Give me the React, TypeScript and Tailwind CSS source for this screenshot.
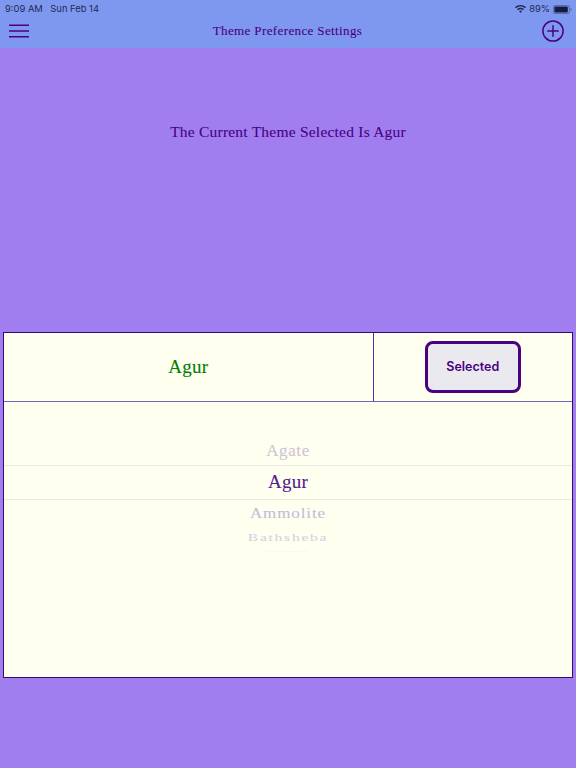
const serif = "font-['Liberation_Serif',serif] [-webkit-text-stroke:0.1px]";
const sans = "font-['Inter',sans-serif]";

function Hamburger() {
  return (
    <svg width="20" height="14" viewBox="0 0 20 14" fill="none" stroke="#4b0082" strokeWidth="1.5">
      <path d="M0 1.25H20M0 7H20M0 12.75H20" />
    </svg>
  );
}

function PlusCircle() {
  return (
    <svg width="22" height="22" viewBox="0 0 22 22" fill="none" stroke="#4b0082" strokeWidth="1.5" strokeLinecap="round">
      <circle cx="11" cy="11" r="10.1" />
      <path d="M11 5.8V16.2M5.8 11H16.2" />
    </svg>
  );
}

function Wifi() {
  return (
    <svg width="11" height="8" viewBox="0 0 11 8" fill="#1e2a55">
      <path d="M5.5 0C3.4 0 1.5.8 0 2.2l1 1.1C2.2 2.1 3.8 1.5 5.5 1.5s3.3.6 4.5 1.8l1-1.1C9.5.8 7.6 0 5.5 0z" />
      <path d="M5.5 2.8c-1.3 0-2.5.5-3.4 1.4l1 1.1c.6-.6 1.5-1 2.4-1s1.8.4 2.4 1l1-1.1C8 3.3 6.8 2.8 5.5 2.8z" />
      <path d="M5.5 5.4c-.6 0-1.1.2-1.5.6L5.5 8 7 6c-.4-.4-.9-.6-1.5-.6z" />
    </svg>
  );
}

function Battery() {
  return (
    <svg width="19" height="9" viewBox="0 0 19 9" fill="none">
      <rect x=".4" y=".4" width="16" height="8.2" rx="2" stroke="#1e2a55" strokeWidth=".7" opacity=".6" />
      <rect x="1.4" y="1.4" width="13.4" height="6.2" rx="1" fill="#141c40" />
      <path d="M17.6 3v3c.6-.2 1-.8 1-1.5s-.4-1.3-1-1.5z" fill="#1e2a55" opacity=".6" />
    </svg>
  );
}

export default function App() {
  return (
    <div className="w-[576px] h-[768px] flex flex-col bg-[#a07ef0] overflow-hidden">
      <header className="h-[48px] bg-[#7d98ee] flex flex-col shrink-0">
        <div className={`h-[15px] flex items-center justify-between pl-[5px] pr-[4px] pt-[3px] text-[9.4px] text-[#1e2a55] ${sans}`}>
          <div className="flex gap-[7.5px]">
            <span>9:09 AM</span>
            <span>Sun Feb 14</span>
          </div>
          <div className="flex items-center gap-[3px]">
            <Wifi />
            <span>89%</span>
            <Battery />
          </div>
        </div>
        <div className="flex-1 flex items-center justify-between pl-[9px] pr-[12px] pb-[1px]">
          <Hamburger />
          <span className={`ml-[4px] text-[13px] tracking-[0.38px] text-[#4b0082] ${serif}`}>Theme Preference Settings</span>
          <PlusCircle />
        </div>
      </header>

      <div className="h-[283.5px] shrink-0 flex justify-center pt-[72px]">
        <span className={`text-[15.5px] h-[20px] tracking-[0.22px] text-[#4b0082] ${serif}`}>The Current Theme Selected Is Agur</span>
      </div>

      <section className="ml-[3px] w-[570px] h-[346px] border-[1.5px] border-[#2f0f6e] bg-[#fffff0] flex flex-col">
        <div className="h-[69px] flex border-b border-b-[#7562bc]">
          <div className={`w-[369.5px] pt-[1px] flex items-center justify-center text-[19px] tracking-[0.2px] text-[#008000] border-r-[1.5px] border-r-[#4a35a8] ${serif}`}>
            Agur
          </div>
          <div className="flex-1 flex items-center justify-center">
            <button className={`w-[96px] h-[52px] pt-[2px] rounded-[8px] border-[3.5px] border-[#4b0082] bg-[#e9e9ee] text-[12.5px] font-semibold text-[#4b0082] ${sans}`}>
              Selected
            </button>
          </div>
        </div>

        <div className={`flex flex-col items-center pt-[34px] ${serif}`}>
          <div className="h-[29px] pt-[1px] w-full flex items-center justify-center text-[17px] tracking-[0.6px] text-[#cfc4d6]">Agate</div>
          <div className="h-[35px] pt-[1px] w-full flex items-center justify-center border-y border-[#ebebe0] text-[19px] tracking-[0.2px] text-[#54208c]">Agur</div>
          <div className="h-[26px] pt-[1px] w-full flex items-center justify-center text-[17px] tracking-[0.9px] text-[#c6bbdc] scale-y-[0.9]">Ammolite</div>
          <div className="h-[23px] pt-[1px] w-full flex items-center justify-center text-[15.5px] tracking-[1.75px] text-[#d6cfe2] scale-y-[0.6]">Bathsheba</div>
          <div className="h-[4px] w-full flex items-center justify-center text-[12px] tracking-[1.2px] text-[#f3f0ea] scale-y-[0.2]">Calcite</div>
        </div>
      </section>
    </div>
  );
}
